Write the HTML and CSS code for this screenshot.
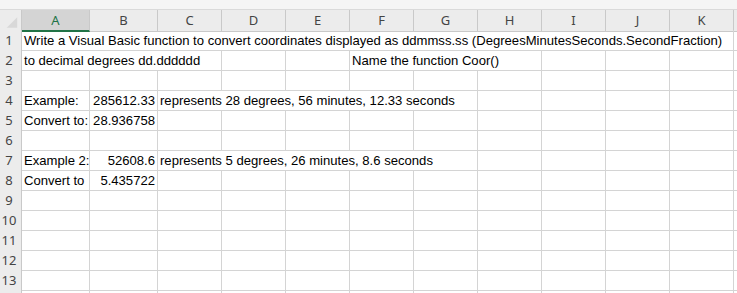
FILE: index.html
```html
<!DOCTYPE html>
<html>
<head>
<meta charset="utf-8">
<link rel="stylesheet" href="styles.css">
</head>
<body>
<div class="sheet">
  <div class="topbar"></div>
  <div class="row head">
    <div class="corner"><svg width="22" height="20" viewBox="0 0 22 20"><polygon points="7,18 18,18 18,7" fill="#d8d8d8"/></svg></div>
    <div class="ch sel">A</div><div class="ch">B</div><div class="ch">C</div><div class="ch">D</div><div class="ch">E</div><div class="ch">F</div><div class="ch">G</div><div class="ch">H</div><div class="ch">I</div><div class="ch">J</div><div class="ch">K</div><div class="ch"></div>
  </div>
  <div class="row">
    <div class="rh">1</div>
    <div class="c s11">Write a Visual Basic function to convert coordinates displayed as ddmmss.ss (DegreesMinutesSeconds.SecondFraction)</div>
    <div class="c"></div>
  </div>
  <div class="row">
    <div class="rh">2</div>
    <div class="c s3">to decimal degrees dd.dddddd</div><div class="c"></div><div class="c"></div>
    <div class="c s3">Name the function Coor()</div><div class="c"></div><div class="c"></div><div class="c"></div><div class="c"></div>
  </div>
  <div class="row">
    <div class="rh">3</div>
    <div class="c"></div><div class="c"></div><div class="c"></div><div class="c"></div><div class="c"></div><div class="c"></div><div class="c"></div><div class="c"></div><div class="c"></div><div class="c"></div><div class="c"></div><div class="c"></div>
  </div>
  <div class="row">
    <div class="rh">4</div>
    <div class="c">Example:</div><div class="c num">285612.33</div>
    <div class="c s5">represents 28 degrees, 56 minutes, 12.33 seconds</div><div class="c"></div><div class="c"></div><div class="c"></div><div class="c"></div><div class="c"></div>
  </div>
  <div class="row">
    <div class="rh">5</div>
    <div class="c">Convert to:</div><div class="c num">28.936758</div>
    <div class="c"></div><div class="c"></div><div class="c"></div><div class="c"></div><div class="c"></div><div class="c"></div><div class="c"></div><div class="c"></div><div class="c"></div><div class="c"></div>
  </div>
  <div class="row">
    <div class="rh">6</div>
    <div class="c"></div><div class="c"></div><div class="c"></div><div class="c"></div><div class="c"></div><div class="c"></div><div class="c"></div><div class="c"></div><div class="c"></div><div class="c"></div><div class="c"></div><div class="c"></div>
  </div>
  <div class="row">
    <div class="rh">7</div>
    <div class="c">Example 2:</div><div class="c num">52608.6</div>
    <div class="c s5">represents 5 degrees, 26 minutes, 8.6 seconds</div><div class="c"></div><div class="c"></div><div class="c"></div><div class="c"></div><div class="c"></div>
  </div>
  <div class="row">
    <div class="rh">8</div>
    <div class="c">Convert to</div><div class="c num">5.435722</div>
    <div class="c"></div><div class="c"></div><div class="c"></div><div class="c"></div><div class="c"></div><div class="c"></div><div class="c"></div><div class="c"></div><div class="c"></div><div class="c"></div>
  </div>
  <div class="row">
    <div class="rh">9</div>
    <div class="c"></div><div class="c"></div><div class="c"></div><div class="c"></div><div class="c"></div><div class="c"></div><div class="c"></div><div class="c"></div><div class="c"></div><div class="c"></div><div class="c"></div><div class="c"></div>
  </div>
  <div class="row">
    <div class="rh">10</div>
    <div class="c"></div><div class="c"></div><div class="c"></div><div class="c"></div><div class="c"></div><div class="c"></div><div class="c"></div><div class="c"></div><div class="c"></div><div class="c"></div><div class="c"></div><div class="c"></div>
  </div>
  <div class="row">
    <div class="rh">11</div>
    <div class="c"></div><div class="c"></div><div class="c"></div><div class="c"></div><div class="c"></div><div class="c"></div><div class="c"></div><div class="c"></div><div class="c"></div><div class="c"></div><div class="c"></div><div class="c"></div>
  </div>
  <div class="row">
    <div class="rh">12</div>
    <div class="c"></div><div class="c"></div><div class="c"></div><div class="c"></div><div class="c"></div><div class="c"></div><div class="c"></div><div class="c"></div><div class="c"></div><div class="c"></div><div class="c"></div><div class="c"></div>
  </div>
  <div class="row">
    <div class="rh">13</div>
    <div class="c"></div><div class="c"></div><div class="c"></div><div class="c"></div><div class="c"></div><div class="c"></div><div class="c"></div><div class="c"></div><div class="c"></div><div class="c"></div><div class="c"></div><div class="c"></div>
  </div>
  <div class="row">
    <div class="rh"></div>
    <div class="c"></div><div class="c"></div><div class="c"></div><div class="c"></div><div class="c"></div><div class="c"></div><div class="c"></div><div class="c"></div><div class="c"></div><div class="c"></div><div class="c"></div><div class="c"></div>
  </div>
</div>
</body>
</html>
```

FILE: styles.css
```css
html, body {
  margin: 0;
  padding: 0;
  background: #ffffff;
  overflow: hidden;
}

.sheet {
  width: 737px;
  height: 293px;
  overflow: hidden;
  font-family: "Liberation Sans", Arial, sans-serif;
  font-size: 13.1px;
  color: #000;
}

.topbar {
  height: 10px;
  background: #f5f5f5;
  box-sizing: border-box;
  border-bottom: 1px solid #dadada;
}

.row {
  display: grid;
  grid-template-columns: 22px 68px 68px repeat(9, 64px) 40px;
  height: 20px;
}

.corner {
  background: #ececec;
  box-sizing: border-box;
  border-right: 1px solid #c9c9c9;
  border-bottom: 1px solid #c9c9c9;
  display: flex;
}

.ch {
  background: #ececec;
  box-sizing: border-box;
  border-right: 1px solid #c9c9c9;
  border-bottom: 1px solid #c9c9c9;
  font-family: "Noto Sans", "Open Sans", sans-serif;
  font-size: 13px;
  color: #444;
  text-align: center;
  line-height: 20px;
}

.ch.sel {
  background: #d4d4d4;
  color: #217346;
  border-bottom: 2px solid #217346;
}

.rh {
  background: #ececec;
  box-sizing: border-box;
  border-right: 1px solid #c9c9c9;
  border-bottom: 1px solid #c9c9c9;
  font-family: "Noto Sans", "Open Sans", sans-serif;
  font-size: 13px;
  color: #444;
  text-align: center;
  padding-right: 3px;
  line-height: 20px;
}

.c {
  box-sizing: border-box;
  border-right: 1px solid #d4d4d4;
  border-bottom: 1px solid #d4d4d4;
  padding: 0 2px;
  line-height: 21px;
  white-space: nowrap;
  overflow: hidden;
}

.c.num {
  text-align: right;
}

.s3 { grid-column: span 3; }
.s5 { grid-column: span 5; }
.s11 { grid-column: span 11; }
```
